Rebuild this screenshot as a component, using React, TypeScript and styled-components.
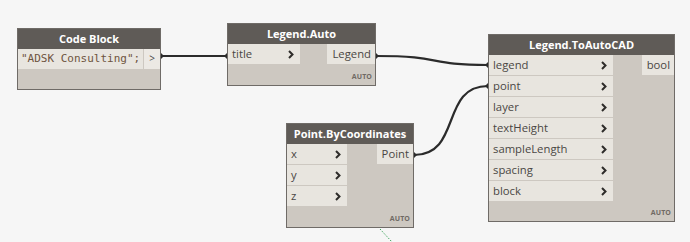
import React from "react";
import styled, { createGlobalStyle } from "styled-components";

const Global = createGlobalStyle`
  html, body { margin: 0; padding: 0; background: #f6f6f6; }
  body { font-family: "Open Sans", "Noto Sans", sans-serif; }
`;

const Canvas = styled.div`
  position: relative;
  width: 690px;
  height: 242px;
  overflow: hidden;
  background: #f6f6f6;
`;

const Wires = styled.svg`
  position: absolute;
  left: 0;
  top: 0;
  width: 690px;
  height: 242px;
  pointer-events: none;
  z-index: 2;
`;

const NodeBox = styled.div<{ $x: number; $y: number; $w: number; $h: number }>`
  position: absolute;
  left: ${(p) => p.$x}px;
  top: ${(p) => p.$y}px;
  width: ${(p) => p.$w}px;
  height: ${(p) => p.$h}px;
  box-sizing: border-box;
  border: 1px solid #6f6b67;
  background: #cdc8c1;
  display: flex;
  flex-direction: column;
  z-index: 1;
`;

const Header = styled.div`
  height: 20px;
  flex: none;
  background: #5f5b57;
  color: #ffffff;
  font-weight: 700;
  font-size: 11px;
  line-height: 20px;
  text-align: center;
`;

const Body = styled.div`
  flex: 1;
  display: flex;
  justify-content: space-between;
  align-items: flex-start;
  position: relative;
`;

const Column = styled.div<{ $w?: number }>`
  display: flex;
  flex-direction: column;
  gap: 1px;
  width: ${(p) => (p.$w ? `${p.$w}px` : "auto")};
`;

const Port = styled.div<{ $out?: boolean }>`
  height: 20px;
  background: #e8e5df;
  color: #4a4744;
  font-size: 11.3px;
  line-height: 20px;
  display: flex;
  align-items: center;
  justify-content: space-between;
  padding: ${(p) => (p.$out ? "0 4px 0 5px" : "0 6px 0 4px")};
  box-sizing: border-box;
`;

const Auto = styled.div`
  position: absolute;
  right: 3px;
  bottom: 4px;
  font-size: 7px;
  font-weight: 700;
  color: #6f6a64;
  letter-spacing: 0.1px;
`;

const CodeRow = styled.div`
  height: 20px;
  display: flex;
  width: 100%;
  background: #e8e5df;
`;

const CodeText = styled.div`
  flex: 1;
  font-family: "DejaVu Sans Mono", "Liberation Mono", monospace;
  font-size: 11px;
  line-height: 20px;
  color: #6e5440;
  padding-left: 3px;
  white-space: nowrap;
`;

const CodeOut = styled.div`
  width: 16px;
  border-left: 1px solid #cdc8c1;
  background: #ece9e4;
  color: #4a4744;
  font-size: 10px;
  line-height: 19px;
  text-align: center;
`;

const Chevron = () => (
  <svg width="6" height="9" viewBox="0 0 6 9">
    <path d="M1 1 L4.5 4.5 L1 8" fill="none" stroke="#2e2c2a" strokeWidth="2" />
  </svg>
);

type NodeProps = {
  x: number;
  y: number;
  w: number;
  h: number;
  title: string;
  inputs: string[];
  inputW: number;
  outputs: string[];
};

const Node = ({ x, y, w, h, title, inputs, inputW, outputs }: NodeProps) => (
  <NodeBox $x={x} $y={y} $w={w} $h={h}>
    <Header>{title}</Header>
    <Body>
      <Column $w={inputW}>
        {inputs.map((i) => (
          <Port key={i}>
            <span>{i}</span>
            <Chevron />
          </Port>
        ))}
      </Column>
      <Column>
        {outputs.map((o) => (
          <Port key={o} $out>
            {o}
          </Port>
        ))}
      </Column>
      <Auto>AUTO</Auto>
    </Body>
  </NodeBox>
);

const Cap = ({ x, y, dir }: { x: number; y: number; dir: 1 | -1 }) => (
  <path
    d={`M${x} ${y - 3} L${x + 3 * dir} ${y} L${x} ${y + 3} Z`}
    fill="#2b2b2b"
  />
);

export default function App() {
  return (
    <>
      <Global />
      <Canvas>
        <NodeBox $x={17} $y={28} $w={144} $h={62}>
          <Header>Code Block</Header>
          <CodeRow>
            <CodeText>"ADSK Consulting";</CodeText>
            <CodeOut>&gt;</CodeOut>
          </CodeRow>
        </NodeBox>

        <Node
          x={227}
          y={23}
          w={149}
          h={63}
          title="Legend.Auto"
          inputs={["title"]}
          inputW={72}
          outputs={["Legend"]}
        />

        <Node
          x={286}
          y={123}
          w={128}
          h={105}
          title="Point.ByCoordinates"
          inputs={["x", "y", "z"]}
          inputW={60}
          outputs={["Point"]}
        />

        <Node
          x={488}
          y={34}
          w={187}
          h={188}
          title="Legend.ToAutoCAD"
          inputs={["legend", "point", "layer", "textHeight", "sampleLength", "spacing", "block"]}
          inputW={124}
          outputs={["bool"]}
        />

        <Wires viewBox="0 0 690 242">
          <path d="M161 56 C 195 56, 195 56, 227 56" fill="none" stroke="#2b2b2b" strokeWidth="2.2" />
          <Cap x={161} y={56} dir={1} />
          <Cap x={227} y={56} dir={-1} />
          <path d="M376 56 C 445 56, 425 65, 488 65" fill="none" stroke="#2b2b2b" strokeWidth="2.2" />
          <Cap x={376} y={56} dir={1} />
          <Cap x={488} y={65} dir={-1} />
          <path d="M414 155 C 462 155, 440 86, 488 86" fill="none" stroke="#2b2b2b" strokeWidth="2.2" />
          <Cap x={414} y={155} dir={1} />
          <Cap x={488} y={86} dir={-1} />
          <path d="M380 229 L392 242" fill="none" stroke="#3aa35a" strokeWidth="1" strokeDasharray="1.5 1.5" />
        </Wires>
      </Canvas>
    </>
  );
}
